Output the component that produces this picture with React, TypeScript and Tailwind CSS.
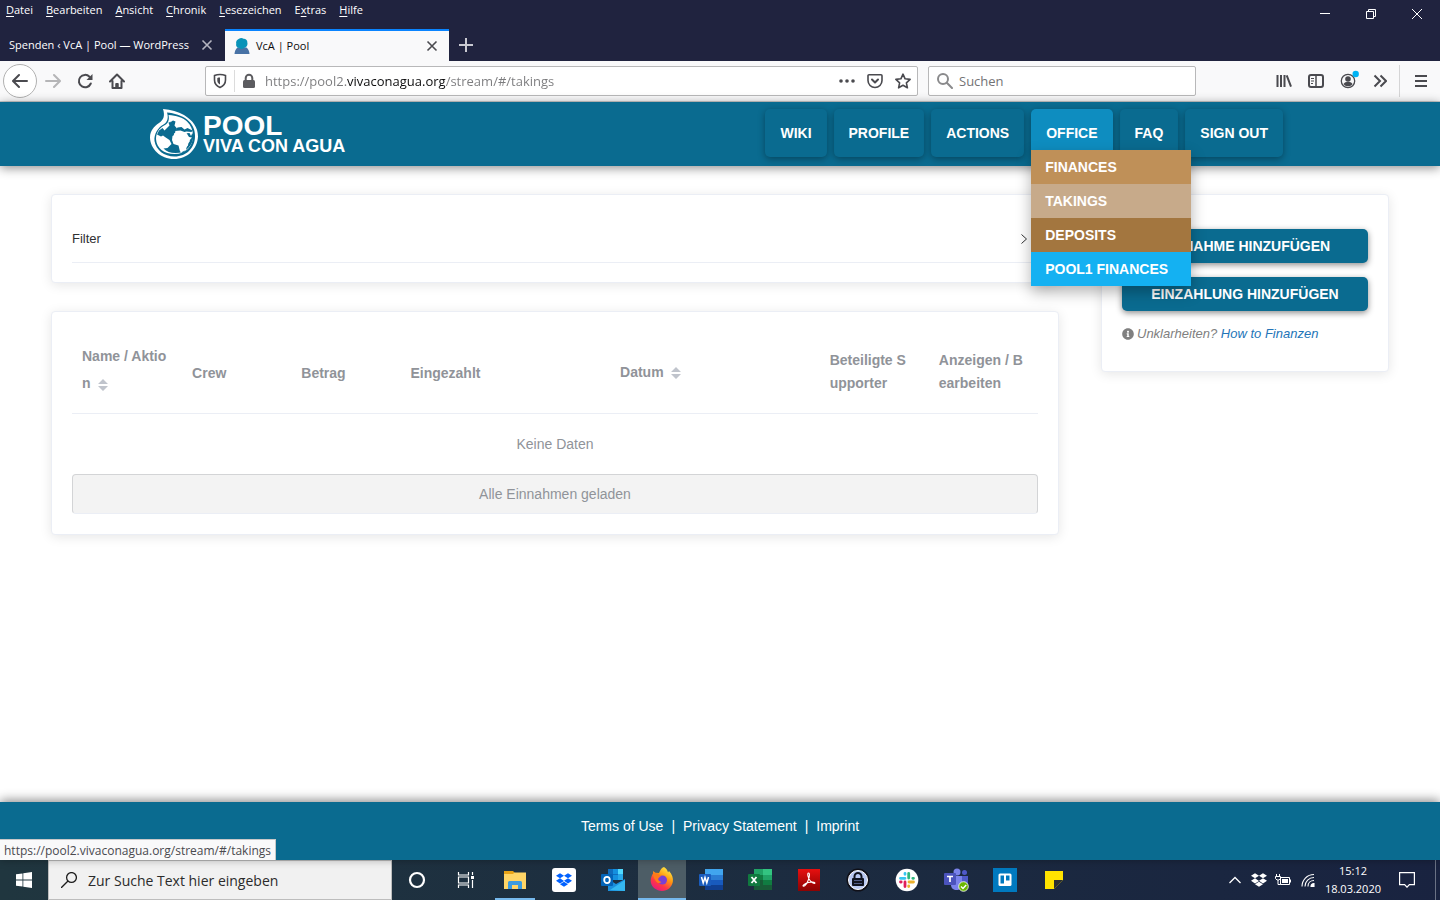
import type { ReactNode } from "react";
import { FaDropbox, FaInfoCircle } from "react-icons/fa";

const menuItems = [
  { key: "D", before: "", after: "atei" },
  { key: "B", before: "", after: "earbeiten" },
  { key: "A", before: "", after: "nsicht" },
  { key: "C", before: "", after: "hronik" },
  { key: "L", before: "", after: "esezeichen" },
  { key: "x", before: "E", after: "tras" },
  { key: "H", before: "", after: "ilfe" },
];

const officeLinks = [
  { label: "FINANCES", color: "bg-[#bf9058]" },
  { label: "TAKINGS", color: "bg-[#c7aa8a]" },
  { label: "DEPOSITS", color: "bg-[#a3763f]" },
  { label: "POOL1 FINANCES", color: "bg-[#14b1f2]" },
];

const navButton =
  "mr-[7px] flex h-12 items-center rounded-[5px] px-[15px] shadow-[0_2px_7px_rgba(0,0,0,0.35)]";

function CloseIcon({ className }: { className: string }) {
  return (
    <svg viewBox="0 0 12 12" className={className} fill="none" stroke="currentColor" strokeWidth="1.6">
      <path d="M1.5 1.5l9 9M10.5 1.5l-9 9" />
    </svg>
  );
}

function TitleBar() {
  return (
    <div className="flex h-[61px] flex-col justify-between bg-[#20233f] text-white">
      <div className="flex items-start justify-between">
        <div className="flex gap-[13px] pl-[6px] text-[11px] leading-5">
          {menuItems.map((item) => (
            <button key={item.key} type="button">
              {item.before}
              <span className="underline underline-offset-2">{item.key}</span>
              {item.after}
            </button>
          ))}
        </div>
        <div className="flex h-7">
          <button type="button" aria-label="Minimieren" className="flex w-[46px] items-center justify-center">
            <svg width="10" height="10" stroke="currentColor">
              <path d="M0 4.500h10" />
            </svg>
          </button>
          <button type="button" aria-label="Verkleinern" className="flex w-[46px] items-center justify-center">
            <svg width="10" height="10" fill="none" stroke="currentColor">
              <path d="M.5 2.500h7v7h-7zM2.500 2.500v-2h7v7h-2" />
            </svg>
          </button>
          <button type="button" aria-label="Schließen" className="flex w-[46px] items-center justify-center">
            <svg width="10" height="10" stroke="currentColor" strokeWidth="1">
              <path d="M0 0l10 10M10 0l-10 10" />
            </svg>
          </button>
        </div>
      </div>
      <div className="flex h-8 text-[11px]">
        <div className="flex w-[225px] items-center justify-between pr-3 pl-[9px]">
          <button type="button" className="whitespace-nowrap">Spenden ‹ VcA | Pool — WordPress</button>
          <button type="button" aria-label="Tab schließen">
            <CloseIcon className="h-3 w-3 text-[#b5b5c0]" />
          </button>
        </div>
        <div className="flex w-56 items-center border-t-2 border-[#0a84ff] bg-[#f9f9fa] pr-[11px] pl-[9px] text-[#0c0c0d]">
          <svg viewBox="0 0 16 16" className="mr-[6px] h-4 w-4">
            <path d="M.5 16c.2-3 1.200-5 3-6.500h9c1.800 1.500 2.800 3.500 3 6.500z" fill="#4872a5" />
            <path d="M5 .8C6.500-.3 8.500 0 9.500.8c2-.3 4.200 1.500 3.800 3.700.8 2.500-.8 5.200-3.300 5.500-1.500 1.200-3.500 1.200-4.800 0C3 10 1.500 8 2.300 6 1.500 4 3 1.500 5 .8z" fill="#0893b8" />
          </svg>
          <button type="button" className="flex-1 text-left">VcA | Pool</button>
          <button type="button" aria-label="Tab schließen">
            <CloseIcon className="h-3 w-3 text-[#4a4a4f]" />
          </button>
        </div>
        <button type="button" aria-label="Neuer Tab" className="ml-[10px] text-[#c9c9d2]">
          <svg width="14" height="14" stroke="currentColor" strokeWidth="2">
            <path d="M7 0v14M0 7h14" />
          </svg>
        </button>
      </div>
    </div>
  );
}

function ToolButton({ label, children }: { label: string; children: ReactNode }) {
  return (
    <button type="button" aria-label={label} className="flex h-8 w-8 items-center justify-center">
      {children}
    </button>
  );
}

function Toolbar() {
  return (
    <div className="flex h-[41px] items-center border-b border-[#cccccc] bg-[#f9f9fa] text-[#4a4a4f]">
      <div className="flex w-[205px] items-center pl-[3px]">
        <button
          type="button"
          aria-label="Zurück"
          className="flex h-[34px] w-[34px] items-center justify-center rounded-full border border-[#b1b1b1] bg-white"
        >
          <svg width="16" height="16" fill="none" stroke="currentColor" strokeWidth="2" strokeLinecap="round" strokeLinejoin="round">
            <path d="M15 8H1.500M7 2L1 8l6 6" />
          </svg>
        </button>
        <ToolButton label="Vor">
          <svg width="16" height="16" fill="none" stroke="#b5b5b7" strokeWidth="2" strokeLinecap="round" strokeLinejoin="round">
            <path d="M1 8h13.500M9 2l6 6-6 6" />
          </svg>
        </ToolButton>
        <ToolButton label="Neu laden">
          <svg width="16" height="16" fill="none" stroke="currentColor" strokeWidth="2" strokeLinecap="round">
            <path d="M13.800 10.500A6.200 6.200 0 1 1 12.500 3.700" />
            <path d="M15.500 1v6h-6z" fill="currentColor" stroke="none" />
          </svg>
        </ToolButton>
        <ToolButton label="Startseite">
          <svg width="16" height="16" fill="none" stroke="currentColor" strokeWidth="2" strokeLinecap="round" strokeLinejoin="round">
            <path d="M1 8.500L8 1.500l7 7M3.500 8v7h9V8" />
            <path d="M6.800 15v-4.500h2.400V15z" fill="currentColor" strokeWidth="1" />
          </svg>
        </ToolButton>
      </div>

      <div className="mr-[10px] flex h-[30px] flex-1 items-center rounded-[2px] border border-[#b8b8b9] bg-white">
        <svg width="16" height="16" fill="none" stroke="currentColor" strokeWidth="1.600" className="ml-[6px]">
          <path d="M8 1.500c2 0 4 .4 5.500 1v4.500c0 3.500-2 6-5.500 7.500-3.500-1.500-5.500-4-5.500-7.500V2.500c1.500-.6 3.500-1 5.500-1z" />
          <path d="M8 4.500c-1 0-2 .1-2.700.4v2.600c0 1.800.9 3 2.700 4.100z" fill="currentColor" stroke="none" />
        </svg>
        <span className="mx-[6px] h-[22px] w-px bg-[#dcdcdc]" />
        <svg width="16" height="16" className="mr-2 text-[#5c5c60]">
          <rect x="2" y="7" width="12" height="8" rx="1.500" fill="currentColor" />
          <path d="M4.700 8V5a3.300 3.300 0 0 1 6.600 0v3" fill="none" stroke="currentColor" strokeWidth="2" />
        </svg>
        <input
          type="text"
          aria-label="Adresse"
          defaultValue="https://pool2.vivaconagua.org/stream/#/takings"
          className="min-w-0 flex-1 bg-[linear-gradient(90deg,#7b7b7d_82px,#0c0c0d_82px,#0c0c0d_181px,#7b7b7d_181px)] bg-clip-text pt-[2px] text-[13px] text-transparent outline-none"
        />
        <div className="flex items-center gap-3 pr-[6px]">
          <svg width="16" height="16" fill="currentColor">
            <circle cx="2" cy="8" r="1.800" />
            <circle cx="8" cy="8" r="1.800" />
            <circle cx="14" cy="8" r="1.800" />
          </svg>
          <svg width="16" height="16" fill="none" stroke="currentColor" strokeWidth="1.600" strokeLinecap="round" strokeLinejoin="round">
            <path d="M2 1.800h12a1 1 0 0 1 1 1v4.700a7 7 0 0 1-14 0V2.800a1 1 0 0 1 1-1z" />
            <path d="M5 6.500L8 9.500l3-3" strokeWidth="2" />
          </svg>
          <svg width="16" height="16" fill="none" stroke="currentColor" strokeWidth="1.600" strokeLinejoin="round">
            <path d="M8 1.200l2.100 4.600 5 .6-3.700 3.400 1 5L8 12.300l-4.400 2.500 1-5L.9 6.400l5-.6z" />
          </svg>
        </div>
      </div>

      <div className="flex h-[30px] w-[268px] items-center rounded-[2px] border border-[#b8b8b9] bg-white pl-2">
        <svg width="16" height="16" fill="none" stroke="#8a8a8c" strokeWidth="2" strokeLinecap="round">
          <circle cx="6" cy="6" r="5" />
          <path d="M9.800 9.800L15 15" />
        </svg>
        <input
          type="text"
          aria-label="Suchen"
          placeholder="Suchen"
          className="ml-[6px] min-w-0 flex-1 pt-[2px] text-[13px] outline-none placeholder:text-[#737375]"
        />
      </div>

      <div className="flex w-[244px] items-center justify-end">
        <ToolButton label="Bibliothek">
          <svg width="16" height="16" fill="none" stroke="currentColor" strokeWidth="2">
            <path d="M1.500 2v12M5 2v12M8.500 2v12M10.700 2.300L15 13.700" />
          </svg>
        </ToolButton>
        <ToolButton label="Seitenleiste">
          <svg width="16" height="16" fill="none" stroke="currentColor" strokeWidth="2">
            <rect x="1" y="2" width="14" height="12" rx="2" />
            <path d="M8 2v12" strokeWidth="1.500" />
            <path d="M3 5.500h3M3 8h3M3 10.500h2" strokeWidth="1" />
          </svg>
        </ToolButton>
        <ToolButton label="Konto">
          <svg width="22" height="22" viewBox="-3 -3 22 22" fill="none" stroke="currentColor">
            <circle cx="8" cy="8" r="6.700" strokeWidth="1.300" />
            <circle cx="8" cy="6" r="2.800" fill="currentColor" stroke="none" />
            <path d="M3.500 11c1-1.500 2.500-2.200 4.500-2.200s3.500.7 4.500 2.200c-1 1.500-2.500 2.300-4.500 2.300S4.500 12.500 3.500 11z" fill="currentColor" stroke="none" />
            <circle cx="15.700" cy="1" r="3.200" fill="#00b3f4" stroke="none" />
          </svg>
        </ToolButton>
        <ToolButton label="Weitere Werkzeuge">
          <svg width="14" height="14" fill="none" stroke="currentColor" strokeWidth="2">
            <path d="M1.500 1.500L7 7l-5.500 5.500M7.500 1.500L13 7l-5.500 5.500" />
          </svg>
        </ToolButton>
        <span className="mx-[3px] h-8 w-px bg-[#d5d5d6]" />
        <button type="button" aria-label="Menü" className="mr-[13px] ml-3">
          <svg width="12" height="12" stroke="currentColor" strokeWidth="2">
            <path d="M0 1h12M0 6h12M0 11h12" />
          </svg>
        </button>
      </div>
    </div>
  );
}

function Logo() {
  return (
    <a href="#/" className="flex items-center font-bold text-white">
      <svg viewBox="0 0 48 50" className="mr-[5px] h-[50px] w-12">
        <path d="M13 0c8 .5 15 2.500 21 6 9 5.500 14 12.500 14 21.500C47.500 40 37.500 50 24 50S.3 40 0 28.500C.2 21.500 4 17.500 9 14c5-3.500 6-7.500 4-14z" fill="#fff" />
        <path d="M17 3.500c7 .5 15 3 20 7 5.500 4.500 8 10 8 16.500C45 38.500 37 47.500 24.500 47.500 14 47.500 6 41 4.500 32 3.800 25 8 18.500 13.500 15.500 18 13 18.500 8 17 3.500z" fill="#0a6b90" />
        <path d="M18.500 6c8 .5 14 2.500 18.500 6.500 4 3.700 6 9 6 14.500 0 10.500-7.500 18-18.500 18C14 45 6.500 39 6 30c0-7 4-11.500 9-14 3.500-2 4.500-5.500 3.500-10z" fill="#fff" />
        <path d="M18.500 14.500l4.500-3 2.500 1-1 4 2.500 3-2 3.500 1 2-3.500 2-.5 4 1.500 4 5 1.500 1.500 6 3 1.500 3-3 1-5 3-4-1.500-2.500-2-1-2-4 5-.5 1.500 3 1.500-3 .8 3c-.3 9.500-7.300 17-17.800 17-5 0-9-1.500-12-4.500l4-.5 4-4-2-4-4.500-3-2-1.500-2 1-4-2 2-4 3.500-2.500 2 2.500 3-3 2-2-1-3 2.500-1z" fill="#0a6b90" />
        <path d="M25 22l2.500-3.500 4-.5 3 2.500 3-1.500 5 2.500-1 1.500-5-.5-2 .5-4-1.500-3 .2z" fill="#0a6b90" />
        <path d="M24 24.500l3-2 5 .5 4.500 1 2.500 4 3 .5-3.500 4-.5 4-4 4.500-3-1.500-1.500-5.500-4-1-2-3.500z" fill="#fff" />
      </svg>
      <span className="flex flex-col pb-[3px]">
        <span className="text-[28px] leading-[26px]">POOL</span>
        <span className="text-lg leading-[14px]">VIVA CON AGUA</span>
      </span>
    </a>
  );
}

function Header() {
  return (
    <header className="relative z-10 bg-[#0a6b90] shadow-[0_2px_10px_rgba(0,0,0,0.45)]">
      <div className="mx-auto flex h-16 max-w-[1140px] items-center justify-between">
        <Logo />
        <nav className="flex pb-[2px] text-sm font-bold text-white">
          <a href="#/wiki" className={navButton}>WIKI</a>
          <a href="#/profile" className={navButton}>PROFILE</a>
          <a href="#/actions" className={navButton}>ACTIONS</a>
          <div className="relative">
            <a href="#/office" className={`${navButton} bg-[#0e8dc0]`}>OFFICE</a>
            <div className="absolute top-[41px] left-0 z-20 w-40 shadow-[0_6px_14px_rgba(0,0,0,0.3)]">
              {officeLinks.map((link) => (
                <a key={link.label} href="#/takings" className={`flex h-[34px] items-center pl-[14px] ${link.color}`}>
                  {link.label}
                </a>
              ))}
            </div>
          </div>
          <a href="#/faq" className={navButton}>FAQ</a>
          <a href="#/signout" className={navButton}>SIGN OUT</a>
        </nav>
      </div>
    </header>
  );
}

const card = "rounded border border-[#ebeef5] bg-white px-5 pt-5 shadow-[0_2px_12px_rgba(0,0,0,0.1)]";

function SortIcon() {
  return (
    <svg width="10" height="12" className="ml-[7px] inline-block text-[#c0c4cc]" fill="currentColor">
      <path d="M5 0l5 5H0zM5 12l5-5H0z" />
    </svg>
  );
}

function TakingsTable() {
  return (
    <div className={`${card} pb-5 text-sm text-[#909399]`}>
      <table className="w-full table-fixed border-collapse">
        <colgroup>
          <col className="w-[11.4%]" />
          <col className="w-[11.3%]" />
          <col className="w-[11.3%]" />
          <col className="w-[21.7%]" />
          <col className="w-[21.7%]" />
          <col className="w-[11.3%]" />
          <col className="w-[11.3%]" />
        </colgroup>
        <thead>
          <tr className="h-[81px] border-b border-[#ebeef5] text-left leading-[23px] whitespace-nowrap">
            <th className="px-[10px] pb-1 leading-[27px]">
              Name / Aktio
              <br />n<SortIcon />
            </th>
            <th className="px-[10px] pt-[2px]">Crew</th>
            <th className="px-[10px] pt-[2px]">Betrag</th>
            <th className="px-[10px] pt-[2px]">Eingezahlt</th>
            <th className="px-[10px]">
              Datum
              <SortIcon />
            </th>
            <th className="px-[10px]">
              Beteiligte S<br />
              upporter
            </th>
            <th className="px-[10px]">
              Anzeigen / B<br />
              earbeiten
            </th>
          </tr>
        </thead>
        <tbody>
          <tr className="h-[61px] text-center">
            <td colSpan={7}>Keine Daten</td>
          </tr>
        </tbody>
      </table>
      <button type="button" className="h-10 w-full rounded border border-[#d3d4d6] border-b-[#ebeef5] bg-[#f3f3f3]">
        Alle Einnahmen geladen
      </button>
    </div>
  );
}

function Sidebar() {
  return (
    <aside className={`${card} w-72 pb-[26px]`}>
      <div className="mt-[14px] flex flex-col gap-[14px] text-sm font-bold text-white">
        <button type="button" className="h-[34px] rounded-[5px] bg-[#0a6b90] shadow-[0_2px_6px_rgba(0,0,0,0.45)]">
          EINNAHME HINZUFÜGEN
        </button>
        <button type="button" className="h-[34px] rounded-[5px] bg-[#0a6b90] shadow-[0_2px_6px_rgba(0,0,0,0.45)]">
          EINZAHLUNG HINZUFÜGEN
        </button>
      </div>
      <p className="mt-3 flex items-center gap-[3px] text-[13px] leading-[22px] text-[#808080] italic">
        <FaInfoCircle className="h-3 w-3" />
        <span>
          Unklarheiten? <a href="#/how-to" className="text-[#2375b8]">How to Finanzen</a>
        </span>
      </p>
    </aside>
  );
}

function TaskButton({ label, className = "", children }: { label: string; className?: string; children: ReactNode }) {
  return (
    <button type="button" aria-label={label} className={`flex h-full w-12 items-center justify-center ${className}`}>
      {children}
    </button>
  );
}

function TaskIcons() {
  return (
    <div className="ml-px flex h-full gap-px">
      <TaskButton label="Cortana">
        <svg width="18" height="18" fill="none" stroke="#fff" strokeWidth="2.200">
          <circle cx="9" cy="9" r="7" />
        </svg>
      </TaskButton>
      <TaskButton label="Taskansicht">
        <svg width="18" height="16" fill="none" stroke="#fff" strokeWidth="1.200">
          <path d="M1.500 0v3h10V0M1.500 16v-3h10v3M1.500 5h10v6h-10zM15.500 0v3M15.500 8v8" />
          <path d="M14 4h3v3h-3z" fill="#fff" stroke="none" />
        </svg>
      </TaskButton>
      <TaskButton label="Explorer" className="bg-[linear-gradient(#76b9ed,#76b9ed)] bg-[length:40px_2px] bg-bottom bg-no-repeat">
        <svg width="22" height="20">
          <path d="M0 1h9l2 2h11v16H0z" fill="#e8a317" />
          <path d="M0 4h9l1.500-1.500H22V19H0z" fill="#ffd566" />
          <path d="M4 19v-6.500q0-1.500 1.500-1.500h11q1.500 0 1.500 1.500V19h-4v-4H8v4z" fill="#3b9be0" />
        </svg>
      </TaskButton>
      <TaskButton label="Dropbox">
        <span className="flex h-6 w-6 items-center justify-center rounded-[3px] bg-white">
          <FaDropbox className="h-4 w-4 text-[#0061ff]" />
        </span>
      </TaskButton>
      <TaskButton label="Outlook">
        <svg width="24" height="22">
          <path d="M7 0h15v11H7z" fill="#0f6cbd" />
          <path d="M12 0h5v5h-5zM12 6h5v5h-5z" fill="#1490df" />
          <path d="M17 0h5v5h-5z" fill="#50d9ff" />
          <path d="M17 5h5v6h-5z" fill="#28a8ea" />
          <path d="M7 10l8 5 9-5v12H7z" fill="#1a8fdc" />
          <path d="M24 11v11L9 21z" fill="#35b8f1" />
          <rect y="5" width="12" height="12" rx="1" fill="#0364b8" />
          <ellipse cx="6" cy="11" rx="2.800" ry="3.200" fill="none" stroke="#fff" strokeWidth="1.800" />
        </svg>
      </TaskButton>
      <TaskButton label="Firefox" className="border-b-2 border-[#76b9ed] bg-[#4d5d66]">
        <svg width="24" height="24" viewBox="0 0 24 24">
          <defs>
            <linearGradient id="fox" x1="0.8" y1="0" x2="0.2" y2="1">
              <stop offset="0" stopColor="#fff44f" />
              <stop offset="0.4" stopColor="#ff980e" />
              <stop offset="0.7" stopColor="#ff3647" />
              <stop offset="1" stopColor="#e31587" />
            </linearGradient>
          </defs>
          <path d="M14 0c2.500 1.500 3.500 3.500 4 5.500l1-1.500c3 3 4.500 7 3.800 11C21.800 20 17.500 24 12 24S.8 19.800.7 14c0-3 1-5.500 2.300-7.500V4l2.500 1.800L9 6c1.500-3.500 2.500-5 5-6z" fill="url(#fox)" />
          <circle cx="12.500" cy="13" r="4.500" fill="#7a3fd4" />
          <path d="M3 6l5 .5 3 2.500-3 2.500c0 2 1.500 3 3.500 3.500-2 2-5 1-6-1.500C4 11 3 9 3 6z" fill="#ff7a1a" />
        </svg>
      </TaskButton>
      <TaskButton label="Word">
        <svg width="24" height="22">
          <path d="M6 0h18v6H6z" fill="#41a5ee" />
          <path d="M6 6h18v5H6z" fill="#2b7cd3" />
          <path d="M6 11h18v5H6z" fill="#185abd" />
          <path d="M6 16h18v5H6z" fill="#103f91" />
          <rect y="5" width="12" height="12" rx="1" fill="#1a5dbe" />
          <path d="M2.500 8l1.700 6L6 8.500 7.800 14l1.700-6" fill="none" stroke="#fff" strokeWidth="1.500" />
        </svg>
      </TaskButton>
      <TaskButton label="Excel">
        <svg width="24" height="22">
          <path d="M6 0h9v6H6z" fill="#21a366" />
          <path d="M15 0h9v6h-9z" fill="#33c481" />
          <path d="M6 6h9v5H6z" fill="#107c41" />
          <path d="M15 6h9v5h-9z" fill="#21a366" />
          <path d="M6 11h18v10H6z" fill="#185c37" />
          <path d="M15 11h9v5h-9z" fill="#107c41" />
          <rect y="5" width="12" height="12" rx="1" fill="#10793f" />
          <path d="M3.500 8l5 6M8.500 8l-5 6" stroke="#fff" strokeWidth="1.800" />
        </svg>
      </TaskButton>
      <TaskButton label="Acrobat">
        <svg width="22" height="22" className="bg-linear-to-b from-[#e81010] to-[#8c0303]">
          <path d="M10.500 4c1.500 0 1 3.500 0 6.500-1 3-3.500 7-5 6.800-1.800-.6 2-3 5-3.800 3-.8 6.500-.7 6.500.5-.2 1.300-3.500-.4-5-2.500C10 9 9 4 10.500 4z" fill="none" stroke="#fff" strokeWidth="1.100" />
        </svg>
      </TaskButton>
      <TaskButton label="KeePass">
        <svg width="24" height="24">
          <circle cx="12" cy="12" r="10.500" fill="#b9c8f2" stroke="#101018" strokeWidth="2" />
          <circle cx="12" cy="12" r="9.500" fill="none" stroke="#fff" strokeWidth="1" />
          <path d="M8.500 11V8.500a3.500 3.500 0 0 1 7 0V11" fill="none" stroke="#10131f" strokeWidth="2" />
          <rect x="6" y="10" width="12" height="8" rx="1" fill="#10131f" />
          <path d="M8 12.500h8M8 15.500h8" stroke="#5f6da0" strokeWidth="0.800" />
        </svg>
      </TaskButton>
      <TaskButton label="Slack">
        <svg width="24" height="24" fill="none" strokeWidth="2.800" strokeLinecap="round">
          <circle cx="12" cy="12" r="11.300" fill="#fff" />
          <path d="M5.500 10.300h4.500M10 5.500v.8" stroke="#36c5f0" />
          <path d="M13.700 5.500V10M17.800 10.300h.7" stroke="#2eb67d" />
          <path d="M14 14h4.500M13.700 17.800v.7" stroke="#ecb22e" />
          <path d="M10 14v4.500M5.500 14h.7" stroke="#e01e5a" />
        </svg>
      </TaskButton>
      <TaskButton label="Teams">
        <svg width="26" height="24">
          <circle cx="14" cy="4" r="3.500" fill="#7b83eb" />
          <circle cx="21.500" cy="4.500" r="2.500" fill="#5059c9" />
          <path d="M17 8h8v7c0 3-2 5-5 5h-3z" fill="#5059c9" />
          <path d="M8 8h11v9c0 3-2.500 5-5.500 5S8 20 8 17z" fill="#7b83eb" />
          <rect x="1" y="5" width="12" height="12" rx="1" fill="#4b53bc" />
          <path d="M4 8.500h6M7 8.500V14" stroke="#fff" strokeWidth="1.700" />
          <circle cx="20.500" cy="18.500" r="4.800" fill="#6bb700" stroke="#fff" strokeWidth="0.800" />
          <path d="M18 18.500l2 2 3.200-3.500" fill="none" stroke="#fff" strokeWidth="1.400" />
        </svg>
      </TaskButton>
      <TaskButton label="Trello">
        <svg width="24" height="24">
          <path d="M0 0h24v24H0z" fill="#0079bf" />
          <rect x="5.500" y="5.500" width="13" height="12.500" rx="1.500" fill="#fff" />
          <path d="M7.500 7.500h3.500v8H7.500zM13 7.500h3.500v5H13z" fill="#0079bf" />
        </svg>
      </TaskButton>
      <TaskButton label="Kurznotizen">
        <svg width="18" height="18">
          <path d="M0 0h18v9l-9 9H0z" fill="#ffe300" />
          <path d="M9 18V9h9z" fill="#2b2f33" />
        </svg>
      </TaskButton>
    </div>
  );
}

function Taskbar() {
  return (
    <div className="flex h-10 items-center bg-linear-to-r from-[#20363f] to-[#192340] text-white">
      <TaskButton label="Start">
        <svg width="16" height="16" fill="#fff">
          <path d="M0 2.300l6.500-.9v6.200H0zM7.300 1.300L16 0v7.600H7.300zM0 8.400h6.500v6.200L0 13.700zM7.300 8.400H16V16l-8.700-1.300z" />
        </svg>
      </TaskButton>
      <div className="flex h-full w-[344px] items-center border border-[#bdbdbd] bg-[#f1f1f1] pl-3 text-[#2b2b2b]">
        <svg width="16" height="16" fill="none" stroke="#1c1c1c" strokeWidth="1.300">
          <circle cx="10.500" cy="5.500" r="4.900" />
          <path d="M7 9L0 16" />
        </svg>
        <input
          type="text"
          aria-label="Suche"
          placeholder="Zur Suche Text hier eingeben"
          className="ml-[11px] min-w-0 flex-1 pt-[2px] text-sm outline-none placeholder:text-[#2b2b2b]"
        />
      </div>
      <TaskIcons />
      <div className="ml-auto flex h-full items-center text-[11px]">
        <svg width="12" height="8" fill="none" stroke="#fff" strokeWidth="1.300">
          <path d="M.5 7L6 1.500 11.500 7" />
        </svg>
        <FaDropbox className="ml-[10px] h-4 w-4" />
        <svg width="16" height="12" fill="none" stroke="#fff" strokeWidth="1" className="ml-2">
          <path d="M5.500 3.500h9v7h-9z" />
          <path d="M7 5h6v4H7zM15 5.500h1v3h-1z" fill="#fff" stroke="none" />
          <path d="M1.500 0v2.500M4.500 0v2.500M.5 2.500h5v2l-1.500 1.500h-2L.5 4.500zM3 6v4.500h2.500" />
        </svg>
        <svg width="14" height="14" fill="none" stroke="#fff" strokeWidth="1.100" className="ml-[10px]">
          <path d="M1 13.500C1 7 6 1.500 13 1.500M4 13.500C4 8.500 8 4.500 13 4.500M7 13.500c0-3.500 2.500-6 6-6" />
          <path d="M10 13.500c0-2 1-3 3-3v3z" fill="#fff" />
        </svg>
        <div className="ml-[10px] text-center leading-[18px]">
          <div>15:12</div>
          <div>18.03.2020</div>
        </div>
        <svg width="16" height="16" fill="none" stroke="#fff" strokeWidth="1.200" className="ml-[18px]">
          <path d="M.6.6h14.800v12h-5L8 15.200l-2.400-2.600h-5z" />
        </svg>
        <span className="mr-1 ml-5 h-full w-px bg-[#6a7285]" />
      </div>
    </div>
  );
}

export default function App() {
  return (
    <div className="flex min-h-screen flex-col bg-white font-['Open_Sans','Noto_Sans',sans-serif]">
      <TitleBar />
      <Toolbar />
      <div className="flex flex-1 flex-col font-['Liberation_Sans',Arial,sans-serif]">
        <Header />
        <main className="flex flex-1 items-start gap-[42px] px-[51px] pt-7 pb-7">
          <div className="flex min-w-0 flex-1 flex-col gap-7">
            <div className={`${card} pb-[19px]`}>
              <button
                type="button"
                className="flex h-12 w-full items-center justify-between border-b border-[#ebeef5] pr-[10px] text-[13px] text-[#303133]"
              >
                Filter
                <svg width="8" height="12" fill="none" stroke="currentColor" strokeWidth="1">
                  <path d="M1.500 1.500L6.500 6l-5 4.500" />
                </svg>
              </button>
            </div>
            <TakingsTable />
          </div>
          <Sidebar />
        </main>
        <footer className="relative h-[58px] bg-[#0a6b90] pt-[14px] text-center text-sm text-white shadow-[0_-2px_10px_rgba(0,0,0,0.45)]">
          <a href="#/terms">Terms of Use</a>
          <span className="mx-2">|</span>
          <a href="#/privacy">Privacy Statement</a>
          <span className="mx-2">|</span>
          <a href="#/imprint">Imprint</a>
          <div className="absolute bottom-0 left-0 h-[21px] border-t border-r border-[#c8c8c8] bg-[#f9f9fa] px-1 font-['Open_Sans','Noto_Sans',sans-serif] text-xs leading-[22px] text-[#4a4a4f]">
            https://pool2.vivaconagua.org/stream/#/takings
          </div>
        </footer>
      </div>
      <Taskbar />
    </div>
  );
}
